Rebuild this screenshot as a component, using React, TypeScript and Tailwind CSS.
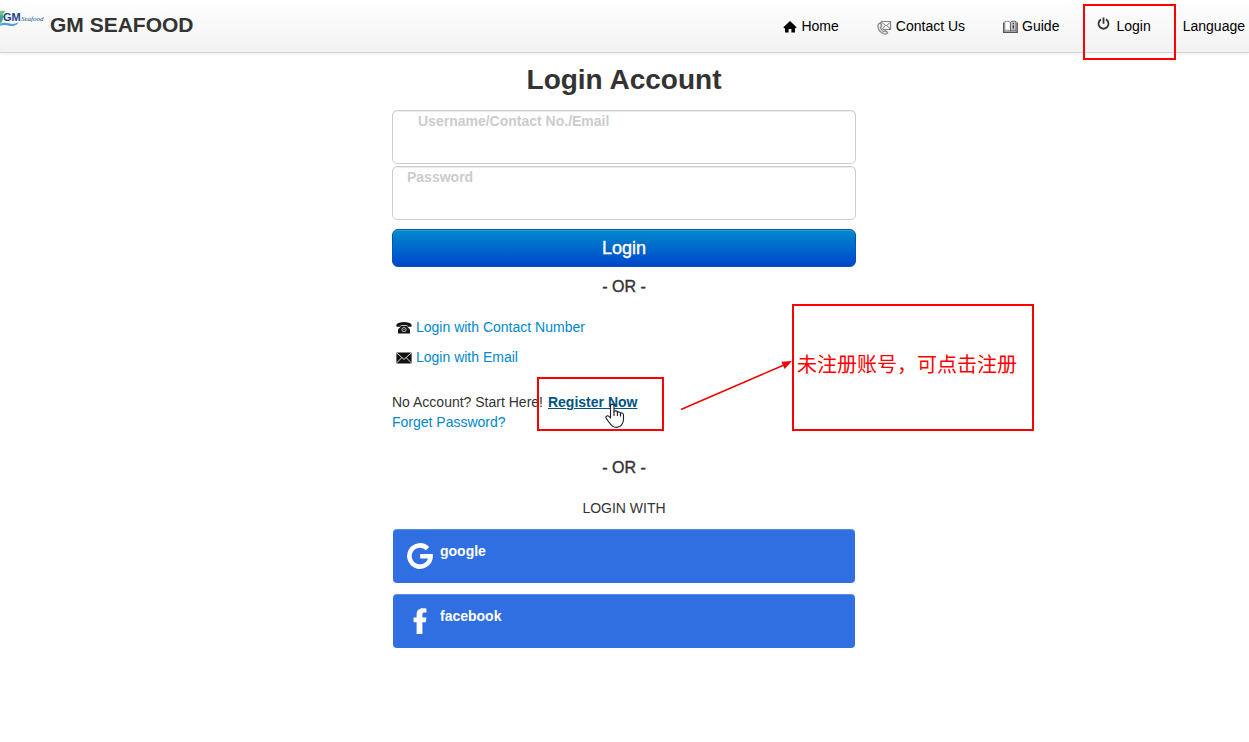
import type { ReactNode } from "react";

function Logo() {
  return (
    <svg width="45" height="18" viewBox="0 0 45 18" aria-hidden="true" className="shrink-0 overflow-visible">
      <path d="M0 1.2C2.2 .6 4 .8 5.4 1.2 3 3 2.8 5.6 3 8.4 2.6 11 1.4 13 0 14.4z" fill="#6fc08a" />
      <path d="M0 5.5C1.6 5 2.8 5 4 6 2.2 8 2.6 11.4 0 13z" fill="#3fa79b" />
      <path d="M0 14.4C5 11 9.4 14.4 12.6 14 15 13.8 16.8 12.6 18.6 12.4 16 15.8 12.6 16.6 9.4 15.8 6 14.8 3 14.4 0 15.8z" fill="#4d9fd6" />
      <text x="3" y="11" fontFamily="Liberation Sans, sans-serif" fontWeight="700" fontSize="11" fill="#1d4386">
        GM
      </text>
      <text x="21" y="11" fontFamily="Liberation Serif, serif" fontWeight="400" fontStyle="italic" fontSize="7" fill="#1d4f99">
        Seafood
      </text>
    </svg>
  );
}

function HomeIcon() {
  return (
    <svg width="14" height="14" viewBox="0 0 14 14" aria-hidden="true" fill="#000">
      <path d="M7 1 13.6 7.2 12.8 8.2H12V12.6H8.4V9H5.6V12.6H2V8.2H1.2L.4 7.2z" />
    </svg>
  );
}

function ContactIcon() {
  return (
    <svg width="15" height="15" viewBox="0 0 15 15" aria-hidden="true" fill="none" stroke="#858585">
      <path d="M4 1.5H13.5V9.5H5.5M4 1.5V5" strokeWidth="1.2" />
      <path d="M4.5 2 9 6 13.5 2M13.2 9.2 10 5.6M5.6 9 8 5.6" strokeWidth="1" />
      <path d="M3.4 3.2C1.4 3.2.6 5 1 7.2 1.5 10 3.8 12.6 6.6 13.8 8.4 14.5 10.4 14 10.6 12.4L8.4 10.8 6.8 11.8C5.2 11 3.8 9.2 3.4 7.4L4.8 6z" fill="#eee" strokeWidth="1.2" />
    </svg>
  );
}

function GuideIcon() {
  return (
    <svg width="15" height="14" viewBox="0 0 15 14" aria-hidden="true" fill="none" stroke="#555">
      <path d="M.7 2.5V12.2H14.2V2.5" strokeWidth="1.4" />
      <path d="M1.8 10.5V1.6C4 1 6 1 7.4 2.2V11C5.8 10 4 10 1.8 10.5z" fill="#fff" stroke="#888" />
      <path d="M13 10.5V1.6C10.8 1 9 1 7.5 2.2V11C9 10 10.8 10 13 10.5z" fill="#c9c9c9" stroke="#666" />
      <path d="M10.3 3V4.2M10.3 5.3V8.6" stroke="#333" strokeWidth="1.3" />
    </svg>
  );
}

function PowerIcon() {
  return (
    <svg width="13" height="14" viewBox="0 0 13 14" aria-hidden="true" fill="none" stroke="#333" strokeWidth="1.8">
      <path d="M4 2.4A5 5 0 1 0 9 2.4M6.5 .4V6.8" />
    </svg>
  );
}

function PhoneIcon() {
  return (
    <svg width="16" height="14" viewBox="0 0 16 14" aria-hidden="true" className="mt-0.5">
      <path d="M.3 5.2C0 3.4 1.4 2.2 3.2 1.7 6.3 .9 9.7 .9 12.8 1.7 14.6 2.2 16 3.4 15.7 5.2L15.2 5.8H11.8L11.3 4.6C9.2 4 6.8 4 4.7 4.6L4.2 5.8H.8z" fill="#161616" />
      <path d="M5 5H11L11.8 6.2 14 8.6V12.6H2V8.6L4.2 6.2z" fill="#161616" />
      <circle cx="8" cy="8.6" r="2.1" fill="none" stroke="#ccc" strokeWidth=".9" />
      <circle cx="8" cy="8.6" r=".7" fill="#bbb" />
    </svg>
  );
}

function MailIcon() {
  return (
    <svg width="16" height="14" viewBox="0 0 16 14" aria-hidden="true" className="mt-0.5">
      <rect x=".4" y="1.4" width="15.2" height="11" rx=".6" fill="#111" />
      <path d="M.8 2 8 8.4 15.2 2M.8 11.8 5.8 6.6M15.2 11.8 10.2 6.6" fill="none" stroke="#ddd" strokeWidth="1" />
    </svg>
  );
}

function GoogleIcon() {
  return (
    <svg width="26" height="26" viewBox="0 0 26 26" aria-hidden="true" fill="none" stroke="#fff" strokeWidth="4.6">
      <path d="M20.6 5.6A10.6 10.6 0 1 0 23.6 13.2H13.2" />
    </svg>
  );
}

function FacebookIcon() {
  return (
    <svg width="26" height="26" viewBox="0 0 26 26" aria-hidden="true" fill="#fff">
      <path d="M9.6 26V14.2H6.6V9.4H9.6V6.4C9.6 2.4 12 .2 15.8 .2 17.2 .2 18.8 .3 19.4 .4V4.6H17.2C15.7 4.6 15.4 5.4 15.4 6.8V9.4H19.4L18.8 14.2H15.4V26z" />
    </svg>
  );
}

function HandCursor() {
  return (
    <svg width="20" height="26" viewBox="0 0 20 26" aria-hidden="true" className="absolute left-[57px] top-[11px]">
      <path
        d="M5.5 14.8V3.2C5.5 .4 9 .4 9 3.2V8.4C10 7.4 12.2 7.8 12.4 9.2 13.6 8.4 15.2 9 15.4 10.2 16.8 9.4 18.5 10.2 18.5 12V16C18.5 20.6 16 24.4 11.4 24.4 8 24.4 6.2 22.6 4.6 20L1.2 15.4C.2 13.8 2 12 3.8 13.2z"
        fill="#fff"
        stroke="#1c1c30"
        strokeWidth="1.1"
      />
      <path d="M9 8.4V13M12.4 9.2V13M15.4 10.2V13.4" stroke="#1c1c30" strokeWidth="1.1" />
    </svg>
  );
}

function NavLink({ icon, children }: { icon: ReactNode; children: ReactNode }) {
  return (
    <a href="#" className="flex items-center gap-1 text-black">
      <span className="mt-0.5">{icon}</span>
      {children}
    </a>
  );
}

function Field({ id, label, type, pad }: { id: string; label: string; type: string; pad: string }) {
  return (
    <div className="flex h-[54px] flex-col rounded-[5px] border border-[#ccc] shadow-[inset_0_1px_1px_rgba(0,0,0,0.075)]">
      <label htmlFor={id} className={`text-sm leading-5 font-bold text-[#ccc] ${pad}`}>
        {label}
      </label>
      <input id={id} type={type} className="min-h-0 w-full flex-1 bg-transparent px-3.5 outline-none" />
    </div>
  );
}

function Divider() {
  return <p className="text-center text-base leading-5 [-webkit-text-stroke:0.4px_#333]">- OR -</p>;
}

function SocialButton({ icon, children }: { icon: ReactNode; children: ReactNode }) {
  return (
    <button
      type="button"
      className="flex h-[54px] items-start gap-[7px] rounded-[4px] bg-[#306fe2] px-3.5 text-sm font-bold text-white shadow-[inset_0_1px_0_rgba(255,255,255,0.2)]"
    >
      <span className="mt-3.5">{icon}</span>
      <span className="mt-3 leading-5">{children}</span>
    </button>
  );
}

export default function App() {
  return (
    <div className="min-h-screen overflow-x-hidden bg-white font-['Liberation_Sans',Arial,sans-serif] text-sm text-[#333]">
      <header className="flex h-[53px] items-center justify-between border-b border-[#d4d4d4] bg-linear-to-b from-white to-[#f2f2f2] pr-1 shadow-[0_1px_4px_rgba(0,0,0,0.07)]">
        <a href="#" className="flex items-center gap-[5px] pb-0.5 text-[21px] leading-8 font-bold text-[#333]">
          <span className="-mt-3">
            <Logo />
          </span>
          GM SEAFOOD
        </a>
        <nav className="flex items-center gap-[38px] text-black">
          <NavLink icon={<HomeIcon />}>Home</NavLink>
          <NavLink icon={<ContactIcon />}>Contact Us</NavLink>
          <NavLink icon={<GuideIcon />}>Guide</NavLink>
          <div className="flex items-center gap-8">
            <a href="#" className="relative flex items-center gap-1.5 text-black">
              <span className="-mt-1">
                <PowerIcon />
              </span>
              Login
              <span className="pointer-events-none absolute -top-3 -right-[25px] -left-3.5 h-14 border-2 border-[#f00]" />
            </a>
            <a href="#">Language</a>
          </div>
        </nav>
      </header>

      <main className="mx-auto flex w-full max-w-[465px] flex-col pr-px">
        <h1 className="pt-[7px] text-center text-[28px] leading-10 font-bold">Login Account</h1>
        <form className="mt-2.5 flex flex-col">
          <div className="flex flex-col gap-0.5">
            <Field id="username" label="Username/Contact No./Email" type="text" pad="pl-[25px]" />
            <Field id="password" label="Password" type="password" pad="pl-3.5" />
          </div>
          <button
            type="button"
            className="mt-[9px] h-[38px] rounded-md border border-[#0055b3] bg-linear-to-b from-[#0088cc] to-[#0044cc] text-lg leading-5 text-white shadow-[inset_0_1px_0_rgba(255,255,255,0.2)] [-webkit-text-stroke:0.4px_#fff] text-shadow-[0_-1px_0_rgba(0,0,0,0.25)]"
          >
            Login
          </button>
        </form>
        <div className="pt-2.5">
          <Divider />
        </div>

        <div className="mt-5 flex flex-col gap-2.5 pl-1 leading-5 text-[#0088cc]">
          <a href="#" className="flex items-center gap-1">
            <PhoneIcon />
            Login with Contact Number
          </a>
          <a href="#" className="flex items-center gap-1">
            <MailIcon />
            Login with Email
          </a>
        </div>

        <div className="mt-[25px] leading-5">
          <p className="flex gap-[5px]">
            No Account? Start Here!
            <span className="relative">
              <a href="#" className="font-bold text-[#005580] underline">
                Register Now
              </a>
              <span className="pointer-events-none absolute -top-[15px] -left-[11px] h-[54px] w-[127px] border-2 border-[#f00]" />
              <HandCursor />
              <svg width="114" height="52" viewBox="0 0 114 52" aria-hidden="true" className="absolute -top-8 left-[132px]">
                <path d="M1 49.5 104 5" stroke="#f00000" strokeWidth="1.5" />
                <path d="M112 1 101.5 1.8 104.5 9z" fill="#f00000" />
              </svg>
              <span className="absolute -top-[88px] left-[244px] flex h-[127px] w-[242px] items-center border-2 border-[#f00] pb-2 pl-[3px] font-['Noto_Sans_CJK_SC',sans-serif] text-xl whitespace-nowrap text-[#f00]">
                未注册账号，可点击注册
              </span>
            </span>
          </p>
          <a href="#" className="text-[#0088cc]">
            Forget Password?
          </a>
        </div>

        <div className="pt-[26px]">
          <Divider />
        </div>
        <p className="mt-5 text-center leading-5">LOGIN WITH</p>
        <div className="mt-[11px] flex flex-col gap-[11px] px-px">
          <SocialButton icon={<GoogleIcon />}>google</SocialButton>
          <SocialButton icon={<FacebookIcon />}>facebook</SocialButton>
        </div>
      </main>
    </div>
  );
}
